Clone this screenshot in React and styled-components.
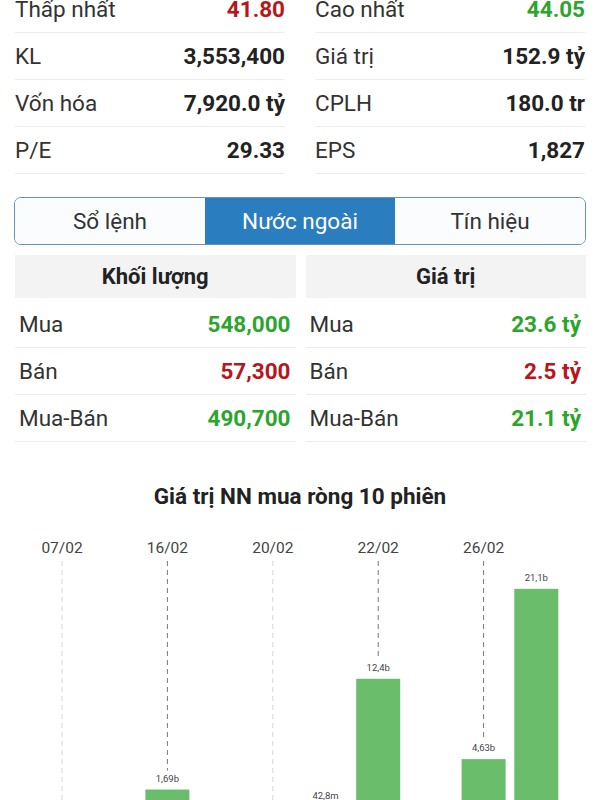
import styled, { createGlobalStyle } from "styled-components";

const GlobalStyle = createGlobalStyle`
  body {
    margin: 0;
    background: #fff;
    font-family: Roboto, "Noto Sans", sans-serif;
    color: #333;
  }
`;

const Page = styled.div`
  margin-top: -14px;
  overflow: hidden;
`;

const Stats = styled.div`
  display: grid;
  grid-template-columns: 1fr 1fr;
  column-gap: 30px;
  padding: 0 15px;
`;

const StatRow = styled.div`
  display: flex;
  justify-content: space-between;
  align-items: center;
  height: 46px;
  border-bottom: 1px solid #ececec;
  font-size: 22.5px;
`;

const Label = styled.span`
  color: #333;
`;

const tones = {
  up: "#2ca52c",
  down: "#b8161b",
  plain: "#222",
};

const Value = styled.span`
  font-weight: 700;
  color: ${(p) => tones[p.$tone || "plain"]};
`;

const Tabs = styled.div`
  display: grid;
  grid-template-columns: repeat(3, 1fr);
  margin: 23px 14px 0;
  height: 46px;
  border: 1px solid #6c90b0;
  border-radius: 7px;
  overflow: hidden;
`;

const Tab = styled.div`
  display: flex;
  align-items: center;
  justify-content: center;
  font-size: 22.5px;
  background: ${(p) => (p.$active ? "#2a7dbf" : "#fafcfd")};
  color: ${(p) => (p.$active ? "#fff" : "#333")};
`;

const Foreign = styled.div`
  display: grid;
  grid-template-columns: 1fr 1fr;
  column-gap: 10px;
  padding: 0 14px 0 15px;
  margin-top: 10px;
`;

const Header = styled.div`
  display: flex;
  align-items: center;
  justify-content: center;
  height: 43px;
  margin-bottom: 3px;
  background: #f3f3f3;
  font-size: 22px;
  font-weight: 700;
  color: #222;
`;

const TableRow = styled(StatRow)`
  padding: 0 5px 0 4px;
`;

const Title = styled.h3`
  margin: 41px 0 0;
  line-height: 26px;
  text-align: center;
  font-size: 22.5px;
  font-weight: 700;
  color: #222;
`;

const Chart = styled.svg`
  display: block;
  margin-top: 11px;
`;

const stats = [
  ["Thấp nhất", "41.80", "down", "Cao nhất", "44.05", "up"],
  ["KL", "3,553,400", null, "Giá trị", "152.9 tỷ", null],
  ["Vốn hóa", "7,920.0 tỷ", null, "CPLH", "180.0 tr", null],
  ["P/E", "29.33", null, "EPS", "1,827", null],
];

const volume = [
  ["Mua", "548,000", "up"],
  ["Bán", "57,300", "down"],
  ["Mua-Bán", "490,700", "up"],
];

const value = [
  ["Mua", "23.6 tỷ", "up"],
  ["Bán", "2.5 tỷ", "down"],
  ["Mua-Bán", "21.1 tỷ", "up"],
];

const sessions = [
  { date: "07/02", v: -3.2, label: "-3,2b" },
  { v: -1.4, label: "-1,4b" },
  { date: "16/02", v: 1.69, label: "1,69b" },
  { v: -0.8, label: "-0,8b" },
  { date: "20/02", v: -2.1, label: "-2,1b" },
  { v: 0.0428, label: "42,8m" },
  { date: "22/02", v: 12.4, label: "12,4b" },
  { v: -0.6, label: "-0,6b" },
  { date: "26/02", v: 4.63, label: "4,63b" },
  { v: 21.1, label: "21,1b" },
];

const X0 = 62;
const STEP = 52.7;
const ZERO = 287;
const SCALE = 10.34;
const BAR_W = 44;

function NetChart() {
  return (
    <Chart width="600" height="380" viewBox="0 0 600 380">
      {sessions.map((s, i) => {
        const cx = X0 + STEP * i;
        const h = Math.abs(s.v) * SCALE;
        const top = s.v >= 0 ? ZERO - h : ZERO;
        const labelY = s.v >= 0 ? top - 8 : ZERO + h + 14;
        return (
          <g key={i}>
            {s.date && (
              <>
                <text x={cx} y="33" textAnchor="middle" fontSize="15.5" fill="#444" fontFamily="Roboto, sans-serif">
                  {s.date}
                </text>
                <line
                  x1={cx}
                  x2={cx}
                  y1="41"
                  y2={s.v > 0 ? labelY - 11 : 380}
                  stroke={s.v > 0 ? "#777" : "#d6d6d6"}
                  strokeWidth="1"
                  strokeDasharray="5 4"
                />
              </>
            )}
            <rect x={cx - BAR_W / 2} y={top} width={BAR_W} height={Math.max(h, 0.5)} fill="#6abd6a" />
            <text x={cx} y={labelY} textAnchor="middle" fontSize="9.5" fill="#444" fontFamily="Roboto, sans-serif">
              {s.label}
            </text>
          </g>
        );
      })}
    </Chart>
  );
}

export default function App() {
  return (
    <>
      <GlobalStyle />
      <Page>
        <Stats>
          {stats.map(([l1, v1, t1, l2, v2, t2]) => (
            <>
              <StatRow key={l1}>
                <Label>{l1}</Label>
                <Value $tone={t1}>{v1}</Value>
              </StatRow>
              <StatRow key={l2}>
                <Label>{l2}</Label>
                <Value $tone={t2}>{v2}</Value>
              </StatRow>
            </>
          ))}
        </Stats>

        <Tabs>
          <Tab>Sổ lệnh</Tab>
          <Tab $active>Nước ngoài</Tab>
          <Tab>Tín hiệu</Tab>
        </Tabs>

        <Foreign>
          <div>
            <Header>Khối lượng</Header>
            {volume.map(([l, v, t]) => (
              <TableRow key={l}>
                <Label>{l}</Label>
                <Value $tone={t}>{v}</Value>
              </TableRow>
            ))}
          </div>
          <div>
            <Header>Giá trị</Header>
            {value.map(([l, v, t]) => (
              <TableRow key={l}>
                <Label>{l}</Label>
                <Value $tone={t}>{v}</Value>
              </TableRow>
            ))}
          </div>
        </Foreign>

        <Title>Giá trị NN mua ròng 10 phiên</Title>
        <NetChart />
      </Page>
    </>
  );
}
